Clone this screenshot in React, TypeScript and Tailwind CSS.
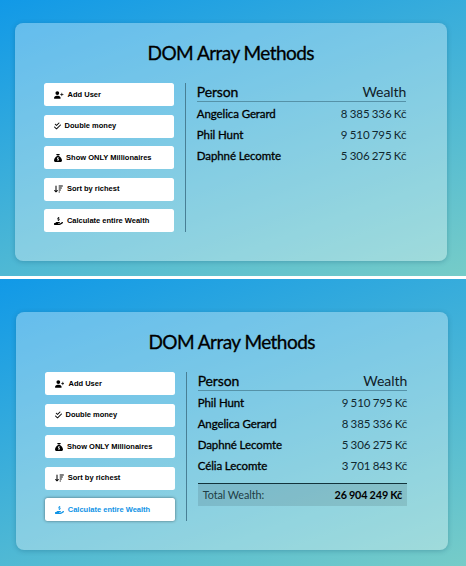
import type { IconType } from "react-icons";
import {
  FaArrowDownWideShort,
  FaCheckDouble,
  FaHandHoldingDollar,
  FaSackDollar,
  FaUserPlus,
} from "react-icons/fa6";

type Person = [name: string, wealth: string];

const actions: { label: string; Icon: IconType; iconClass: string }[] = [
  { label: "Add User", Icon: FaUserPlus, iconClass: "w-[9.5px] mr-[4px]" },
  { label: "Double money", Icon: FaCheckDouble, iconClass: "w-[7px] mr-[3.5px]" },
  { label: "Show ONLY Millionaires", Icon: FaSackDollar, iconClass: "w-[8px] mr-[4px]" },
  { label: "Sort by richest", Icon: FaArrowDownWideShort, iconClass: "w-[9px] mr-[3.8px]" },
  { label: "Calculate entire Wealth", Icon: FaHandHoldingDollar, iconClass: "w-[9px] mr-[3.8px]" },
];

const gerard: Person = ["Angelica Gerard", "8 385 336 Kč"];
const hunt: Person = ["Phil Hunt", "9 510 795 Kč"];
const lecomte: Person = ["Daphné Lecomte", "5 306 275 Kč"];
const celia: Person = ["Célia Lecomte", "3 701 843 Kč"];

function Panel({ people, total, active }: { people: Person[]; total?: string; active?: string }) {
  return (
    <section className="h-[238px] w-[431.5px] rounded-[8px] bg-white/33 pl-[29px] pr-[40.5px] pt-[18px] shadow-[0_1px_5px_rgba(0,60,90,0.25)]">
      <h1 className="pl-[11px] text-center text-[19px] leading-[24px] tracking-[-0.55px] [-webkit-text-stroke:0.3px_#000]">
        DOM Array Methods
      </h1>
      <div className="mt-[18px] flex h-[149px]">
        <div className="flex w-[129.5px] flex-col justify-between">
          {actions.map(({ label, Icon, iconClass }) => (
            <button
              key={label}
              className={`flex h-[23px] items-center rounded-[2.5px] bg-white pl-[9.8px] font-['Liberation_Sans',Arial,sans-serif] text-[7.5px] font-bold leading-none ${
                label === active ? "text-[#0f93e6] shadow-[0_0_3px_rgba(0,0,0,0.5)]" : "text-black"
              }`}
            >
              <Icon className={`h-[8px] shrink-0 ${iconClass}`} />
              {label}
            </button>
          ))}
        </div>
        <div className="ml-[11px] flex-1 border-l border-[#487f95] pl-[11px]">
          <div className="flex h-[19px] items-end justify-between border-b border-[#5592a8] text-[14px] leading-[19px]">
            <span className="tracking-[-0.15px] [-webkit-text-stroke:0.3px_#000]">Person</span>
            <span className="tracking-[-0.05px] text-[#102028]">Wealth</span>
          </div>
          <div className="pt-[1.9px]">
            {people.map(([name, wealth]) => (
              <div key={name} className="flex h-[20.7px] items-center justify-between text-[11.5px] leading-none">
                <span className="tracking-[-0.1px] [-webkit-text-stroke:0.3px_#000]">{name}</span>
                <span className="tracking-[-0.08px] [word-spacing:-0.6px] text-[#102830]">{wealth}</span>
              </div>
            ))}
          </div>
          {total && (
            <div className="mt-[7.1px] flex h-[23px] items-center justify-between border-t border-[#12333b] bg-black/10 px-[5px] pt-[1.5px] text-[10.8px] leading-none">
              <span className="tracking-[-0.07px] text-[#203c44]">Total Wealth:</span>
              <span className="font-bold tracking-[-0.1px] [word-spacing:-0.4px]">{total}</span>
            </div>
          )}
        </div>
      </div>
    </section>
  );
}

export default function App() {
  return (
    <main className="h-[566px] w-[466px] overflow-hidden bg-white font-[Lato,sans-serif] text-black">
      <div className="h-[276px] bg-[linear-gradient(160deg,#1199e7_0%,#76ccc8_100%)] pl-[15.3px] pt-[23px]">
        <Panel people={[gerard, hunt, lecomte]} />
      </div>
      <div className="mt-[3px] h-[287px] bg-[linear-gradient(160deg,#1199e7_0%,#76ccc8_100%)] pl-[16.2px] pt-[33px]">
        <Panel
          people={[hunt, gerard, lecomte, celia]}
          total="26 904 249 Kč"
          active="Calculate entire Wealth"
        />
      </div>
    </main>
  );
}
